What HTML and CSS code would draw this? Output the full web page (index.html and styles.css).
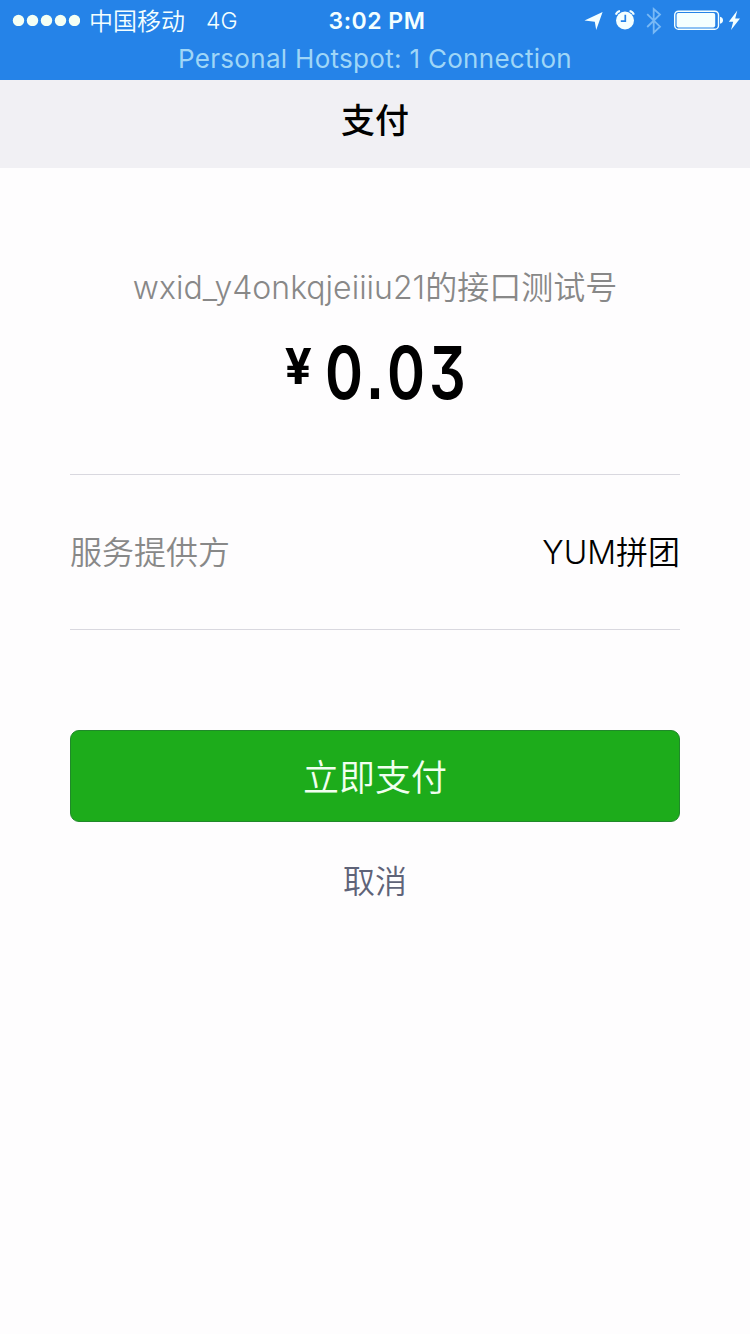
FILE: index.html
```html
<!DOCTYPE html>
<html lang="zh-CN">
  <head>
    <meta charset="utf-8">
    <meta name="viewport" content="width=device-width, initial-scale=1.0">
    <title>支付</title>
    <link rel="stylesheet" href="styles.css">
  </head>
  <body>
    <div class="status-bar">
      <div class="status-row">
        <div class="carrier">
          <svg class="signal" width="68" height="12" viewBox="0 0 68 12">
            <circle cx="6.5" cy="6.5" r="5.7"/>
            <circle cx="20.5" cy="6.5" r="5.7"/>
            <circle cx="34.5" cy="6.5" r="5.7"/>
            <circle cx="48.5" cy="6.5" r="5.7"/>
            <circle cx="62.5" cy="6.5" r="5.7"/>
          </svg>
          <span class="carrier-name">中国移动</span>
          <span class="network">4G</span>
        </div>
        <div class="time">3:02 PM</div>
        <svg class="status-icons" width="160" height="40" viewBox="0 0 160 40">
          <!-- location -->
          <path d="M12.6 12 L6.2 30 L4.8 21.8 L-5.5 20.5 Z"/>
          <!-- alarm clock -->
          <circle cx="35" cy="20.5" r="9"/>
          <path class="line" d="M25.8 14.6 Q26.8 11.6 30 11 M39.6 11 Q42.9 11.6 43.9 14.6" stroke-width="2"/>
          <path class="hands" d="M35.3 14.8 V21.2 H30.8"/>
          <!-- bluetooth -->
          <path class="line bluetooth" d="M57.2 14.2 L70 26.7 L63.7 32.6 V9 L70 14.5 L57.2 27" stroke-width="1.8"/>
          <!-- battery -->
          <rect class="line" x="84.7" y="11.2" width="43.8" height="18" rx="3.8" stroke-width="1.4"/>
          <rect x="86.6" y="13" width="38.6" height="14.4" rx="1.8"/>
          <path d="M130 16.8 Q133 17.3 133 20.3 Q133 23.2 130 23.8 Z"/>
          <!-- charging -->
          <path d="M147.3 10.5 L138.8 21.7 H143.2 L141 30 L150 18.6 H145.2 Z"/>
        </svg>
      </div>
      <div class="hotspot">Personal Hotspot: 1 Connection</div>
    </div>

    <header>
      <h1>支付</h1>
    </header>

    <main>
      <p class="payee">wxid_y4onkqjeiiiu21<span class="payee-type">的接口测试号</span></p>
      <p class="amount"><span class="currency">¥</span><span class="value">0<span class="point">.</span>03</span></p>
      <div class="provider">
        <span class="label">服务提供方</span>
        <span class="name">YUM拼团</span>
      </div>
      <button class="pay">立即支付</button>
      <button class="cancel">取消</button>
    </main>
  </body>
</html>
```
FILE: styles.css
```css
* {
  box-sizing: border-box;
}
body {
  margin: 0;
  min-height: 1334px;
  font-family: Inter, "Noto Sans CJK SC", sans-serif;
  font-weight: 350;
  background-color: #fefdfe;
  color: #000;
}
.status-bar {
  height: 80px;
  background-color: #2583e8;
  color: #f4ffff;
}
.status-row {
  display: grid;
  grid-template-columns: 1fr auto 1fr;
  align-items: center;
  height: 40px;
}
.carrier {
  display: flex;
  align-items: center;
  padding-left: 12px;
  font-size: 24px;
  line-height: 36px;
}
.signal {
  fill: #f4fff4;
}
.carrier-name {
  margin-left: 9px;
  padding-top: 3px;
}
.network {
  margin-left: 21px;
  padding-top: 2px;
  font-size: 23px;
}
.time {
  padding: 2px 0 0 4px;
  font-size: 23px;
  font-weight: 600;
  letter-spacing: 0.5px;
}
.status-icons {
  justify-self: end;
  overflow: visible;
  fill: #f4ffff;
}
.line {
  fill: none;
  stroke: #f4ffff;
}
.bluetooth {
  stroke: #79b9f5;
}
.hands {
  fill: none;
  stroke: #2583e8;
  stroke-width: 1.7;
}
.hotspot {
  font-size: 26px;
  font-weight: 400;
  line-height: 38px;
  letter-spacing: 0.3px;
  text-align: center;
  color: #9fd6f7;
}
header {
  height: 88px;
  background-color: #f1f0f4;
}
h1 {
  margin: 0;
  font-size: 34px;
  font-weight: 500;
  line-height: 82px;
  text-align: center;
}
main {
  display: flex;
  flex-direction: column;
  padding: 96px 70px 0;
}
p {
  margin: 0;
  text-align: center;
}
.payee {
  font-size: 32px;
  font-weight: 300;
  line-height: 48px;
  color: #888;
}
.payee-type {
  font-weight: 350;
}
.amount {
  display: flex;
  justify-content: center;
  height: 162px;
  padding-top: 20px;
}
.currency {
  font-size: 50px;
  font-weight: 700;
  line-height: 68px;
  transform: scaleX(0.95);
}
.value {
  margin: 0 -42px 0 13px;
  font-size: 73px;
  font-weight: 620;
  line-height: 82px;
  letter-spacing: 5px;
  font-feature-settings: "cv09";
  transform: scaleX(0.79);
  transform-origin: left;
}
.point {
  font-family: "Liberation Sans", sans-serif;
  font-weight: 700;
}
.provider {
  display: flex;
  justify-content: space-between;
  height: 156px;
  border-top: 1px solid #d9d8df;
  border-bottom: 1px solid #d9d8df;
  font-size: 32px;
  line-height: 156px;
}
.label {
  color: #888;
}
button {
  border: none;
  padding: 0;
  font-family: inherit;
  font-weight: 350;
}
.pay {
  height: 92px;
  margin-top: 100px;
  padding-bottom: 3px;
  border: 1px solid #20892a;
  border-radius: 9px;
  background-color: #1dac1b;
  color: #f1fff0;
  font-size: 36px;
}
.cancel {
  align-self: center;
  margin-top: 36px;
  background: none;
  color: #5f6378;
  font-size: 32px;
  line-height: 48px;
}
```
